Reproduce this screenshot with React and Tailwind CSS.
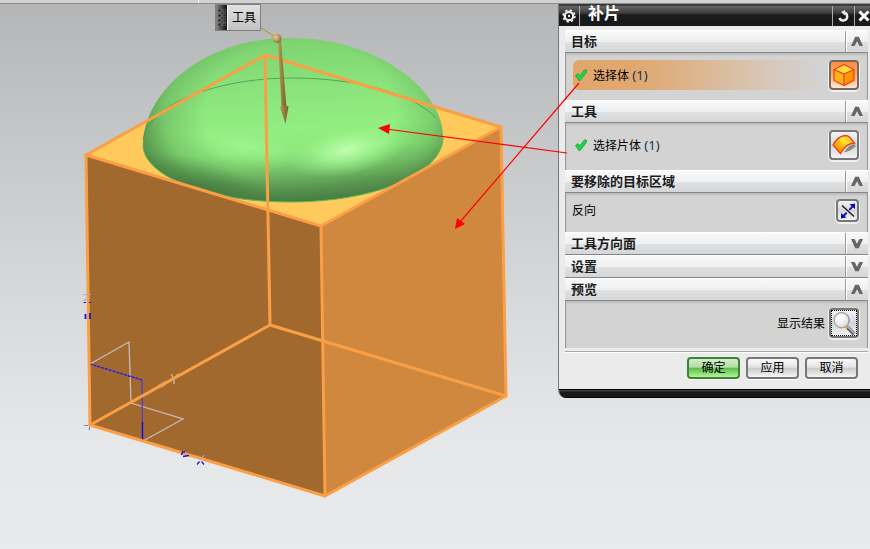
import React, { useState } from 'react';
import clsx from 'clsx';

const EDGE = '#fa9f45';

function CheckMark() {
  return (
    <svg width="12" height="12" viewBox="0 0 12 12" className="shrink-0" aria-hidden="true">
      <path d="M0.500 6.500 L3 4.500 L4.700 7 L9.500 0.800 L11.700 1.400 L11.200 3.800 L5.200 11.400 L3.800 11.400 Z" fill="#22d44a" stroke="#12a52f" strokeWidth="0.8" />
    </svg>
  );
}

function Chevron({ open }) {
  return (
    <svg width="14" height="12" viewBox="0 0 14 12" aria-hidden="true">
      <path d={open ? 'M1 10 L5.2 0.8 H8.8 L13 10 H9.4 L7 5.2 L4.6 10 Z' : 'M1 1 L5.2 10.2 H8.8 L13 1 H9.4 L7 5.8 L4.6 1 Z'} fill="#666" />
    </svg>
  );
}

function CubeIcon() {
  return (
    <svg width="24" height="24" viewBox="0 0 24 24" aria-hidden="true">
      <defs>
        <linearGradient id="cubeRight" x1="0" y1="0" x2="1" y2="1">
          <stop offset="0" stopColor="#ffb400" />
          <stop offset="1" stopColor="#ff7a00" />
        </linearGradient>
      </defs>
      <path d="M12 1.5 L22 6.5 L12 11 L2 6.5 Z" fill="#ffdc3c" />
      <path d="M2 6.5 L12 11 V22.5 L2 17.5 Z" fill="#ffb21c" />
      <path d="M22 6.5 L12 11 V22.5 L22 17.5 Z" fill="url(#cubeRight)" />
      <path d="M12 1.5 L22 6.5 V17.5 L12 22.5 L2 17.5 V6.5 Z M2 6.5 L12 11 L22 6.5 M12 11 V22.5" fill="none" stroke="#f03c14" strokeWidth="1.2" />
    </svg>
  );
}

function SheetIcon() {
  return (
    <svg width="24" height="24" viewBox="0 0 24 24" aria-hidden="true">
      <defs>
        <linearGradient id="sheetFill" x1="0" y1="1" x2="1" y2="0">
          <stop offset="0" stopColor="#ff8a00" />
          <stop offset="0.3" stopColor="#ff9c08" />
          <stop offset="0.6" stopColor="#ffe62e" />
          <stop offset="1" stopColor="#ffae10" />
        </linearGradient>
      </defs>
      <path d="M12 19.500 Q16 12 22 11 L24 13 Q19 18 12 19.500 Z" fill="#8a8a8a" />
      <path d="M1 12 C4 6.500 8 3 13 2.500 Q16 2.500 17.500 4 L22.5 10 C16 10 12 14 8.500 20.500 Z" fill="url(#sheetFill)" stroke="#e8401c" strokeWidth="1.3" />
    </svg>
  );
}

function ReverseIcon() {
  return (
    <svg width="16" height="16" viewBox="0 0 16 16" aria-hidden="true">
      <path d="M2 2.5 L14 13.5" stroke="#111" strokeWidth="1.3" />
      <path d="M3.5 13 L13 3" stroke="#1414b4" strokeWidth="2" strokeDasharray="4.500 4" />
      <path d="M15 0.500 V6 L9.500 1.500 Z M1 15.500 V10 L6.500 14.500 Z" fill="#0a0ab4" />
    </svg>
  );
}

function MagnifierIcon() {
  return (
    <svg width="26" height="26" viewBox="0 0 26 26" aria-hidden="true">
      <defs>
        <radialGradient id="lens" cx="0.35" cy="0.3" r="0.8">
          <stop offset="0" stopColor="#fff" />
          <stop offset="0.7" stopColor="#e8e8ea" />
          <stop offset="1" stopColor="#b8bcc8" />
        </radialGradient>
      </defs>
      <path d="M16.5 17.5 L24 25" stroke="#62666f" strokeWidth="4" />
      <path d="M17 17 L24.5 24.5" stroke="#b8c0d0" strokeWidth="1.4" />
      <path d="M15 18.5 L18 15.5" stroke="#e6a51e" strokeWidth="2.5" />
      <circle cx="10.5" cy="10" r="8.2" fill="url(#lens)" stroke="#a0a0a4" strokeWidth="1.3" />
      <path d="M16 4.2 A8.2 8.2 0 0 1 18 13" fill="none" stroke="#7fa4e6" strokeWidth="1.3" />
    </svg>
  );
}

function IconButton({ id, small, active, focused, children }) {
  return (
    <button
      id={id}
      type="button"
      className={clsx(
        'flex shrink-0 items-center justify-center rounded border-2 shadow-[0_1px_0_1px_#f0f0f0]',
        small ? 'size-[23px]' : 'size-[30px]',
        active
          ? 'border-[#76695f] bg-linear-to-b from-[#ff8a3c] via-[#ffac70] to-[#ffe6d0]'
          : 'border-[#777] bg-linear-to-b from-[#f4f4f4] via-[#d6d6d8] to-[#f2f2f2]'
      )}
    >
      {focused ? (
        <span className="flex size-[26px] items-center justify-center border border-dotted border-black">{children}</span>
      ) : (
        children
      )}
    </button>
  );
}

function Section({ title, defaultOpen = false, children }) {
  const [open, setOpen] = useState(defaultOpen);

  return (
    <section>
      <button
        type="button"
        aria-expanded={open}
        onClick={() => setOpen(!open)}
        className="flex h-[23px] w-full items-stretch border-t border-b border-t-white border-b-[#858585] bg-[linear-gradient(#f8f8f9_0%,#eff0f1_50%,#dfe0e2_55%,#d5d6d8_100%)] text-left"
      >
        <span className="flex flex-1 items-center pl-1.5 text-[13px] leading-5 font-bold text-[#1c1c1c]">{title}</span>
        <span className="flex w-[23px] items-center justify-center border-l border-[#999] shadow-[inset_1px_0_0_#fff]">
          <Chevron open={open} />
        </span>
      </button>
      {open && children && (
        <div className="border-x border-[#999] bg-[#d3d3d3] shadow-[inset_0_2px_2px_#bcbcbc]">{children}</div>
      )}
    </section>
  );
}

function SelectionRow({ id, name, count, active, children }) {
  return (
    <div className="flex h-[47px] items-start pt-[7px] pr-2 pl-[7px]">
      <div
        className={clsx(
          'flex h-[30px] flex-1 items-center gap-1.5 rounded-l-md pl-0.5',
          active && 'bg-[linear-gradient(90deg,#e2a66b_0%,#e0a870_25%,#d3d3d3_96%)]'
        )}
      >
        <CheckMark />
        <label htmlFor={id} className="text-[12px] leading-4 text-black">
          {name} <span className="font-['Noto_Sans'] text-[13px] text-[#16324f]">({count})</span>
        </label>
      </div>
      <IconButton id={id} active={active}>
        {children}
      </IconButton>
    </div>
  );
}

function FooterButton({ primary, children }) {
  return (
    <button
      type="button"
      className={clsx(
        'h-[22px] w-[53px] rounded border-2 text-[12px] leading-4 text-black shadow-[0_1px_0_#fff]',
        primary
          ? 'border-[#3d8238] bg-[linear-gradient(#d2edca_0%,#b2dfa5_45%,#62bd4d_52%,#b0f595_100%)]'
          : 'border-[#777] bg-[linear-gradient(#fafafa_0%,#e4e4e5_45%,#c9cacb_52%,#f5f5f5_100%)]'
      )}
    >
      {children}
    </button>
  );
}

function TitleBar() {
  return (
    <div className="flex h-[22px] items-stretch border-t-2 border-[#3a3a3a] bg-[linear-gradient(#666_0%,#3c3c3c_35%,#1b1b1b_45%,#181818_100%)] text-white">
      <button type="button" aria-label="选项" className="flex w-[21px] items-center justify-center border-r border-[#aaa]">
        <svg width="14" height="14" viewBox="0 0 14 14" aria-hidden="true">
          <circle cx="7" cy="7" r="4.2" fill="none" stroke="#eee" strokeWidth="2.2" />
          <circle cx="7" cy="7" r="5.9" fill="none" stroke="#eee" strokeWidth="1.6" strokeDasharray="2.3 2.33" />
          <circle cx="7" cy="7" r="1.2" fill="#eee" />
        </svg>
      </button>
      <h1 className="flex flex-1 items-center pb-1 pl-2 text-[16px] leading-4 font-bold">补片</h1>
      <button type="button" aria-label="重置" className="flex w-[22px] items-center justify-center border-l border-[#aaa]">
        <svg width="14" height="14" viewBox="0 0 14 14" aria-hidden="true">
          <path d="M6.500 3.500 A4 4 0 1 1 2.500 9" fill="none" stroke="#eee" strokeWidth="2.4" />
          <path d="M8 1 V6.500 L4 3 Z" fill="#eee" />
        </svg>
      </button>
      <button type="button" aria-label="关闭" className="flex w-4 items-center justify-end border-l border-[#aaa]">
        <svg width="12" height="12" viewBox="0 0 12 12" aria-hidden="true">
          <path d="M1.500 1.5 L10.5 10.5 M10.5 1.5 L1.500 10.5" stroke="#fff" strokeWidth="3" />
        </svg>
      </button>
    </div>
  );
}

function PatchDialog() {
  return (
    <form
      className="w-[312px] overflow-hidden rounded-bl-lg border-l border-[#777] bg-[#ebebeb]"
      onSubmit={(e) => e.preventDefault()}
    >
      <TitleBar />
      <div className="pt-1 pr-0.5 pl-1.5">
        <Section title="目标" defaultOpen>
          <SelectionRow id="target-body" name="选择体" count={1} active>
            <CubeIcon />
          </SelectionRow>
        </Section>
        <Section title="工具" defaultOpen>
          <SelectionRow id="tool-sheet" name="选择片体" count={1}>
            <SheetIcon />
          </SelectionRow>
        </Section>
        <Section title="要移除的目标区域" defaultOpen>
          <div className="flex h-[39px] items-start justify-between pt-1.5 pr-2 pl-1.5">
            <label htmlFor="reverse" className="text-[12px] leading-6">反向</label>
            <IconButton id="reverse" small>
              <ReverseIcon />
            </IconButton>
          </div>
        </Section>
        <Section title="工具方向面" />
        <Section title="设置" />
        <Section title="预览" defaultOpen>
          <div className="flex h-[47px] items-start justify-end gap-1 pt-[7px] pr-2">
            <label htmlFor="show-result" className="text-[12px] leading-8">显示结果</label>
            <IconButton id="show-result" focused>
              <MagnifierIcon />
            </IconButton>
          </div>
        </Section>
        <div className="mt-[3px] border-t border-b border-t-[#aaa] border-b-white" />
        <div className="flex justify-end gap-1.5 pt-1 pr-2.5 pb-2.5">
          <FooterButton primary>确定</FooterButton>
          <FooterButton>应用</FooterButton>
          <FooterButton>取消</FooterButton>
        </div>
      </div>
      <div className="h-[9px] border-t border-black bg-[linear-gradient(#555_0%,#1a1a1a_25%,#1a1a1a_80%,#000_100%)]" />
    </form>
  );
}

// Block, dome sheet and datum axes in the graphics window
function ModelView() {
  return (
    <svg width="870" height="549" viewBox="0 0 870 549" className="absolute top-0 left-0" aria-hidden="true">
      <defs>
        <linearGradient id="domeBase" gradientUnits="userSpaceOnUse" x1="285" y1="38" x2="295" y2="202">
          <stop offset="0" stopColor="#7dd270" />
          <stop offset="0.25" stopColor="#88e07a" />
          <stop offset="0.55" stopColor="#92ee80" />
          <stop offset="0.68" stopColor="#8de97c" />
          <stop offset="0.78" stopColor="#7acb6c" />
          <stop offset="0.88" stopColor="#62a358" />
          <stop offset="1" stopColor="#4a8043" />
        </linearGradient>
        <radialGradient id="domeRim" gradientUnits="userSpaceOnUse" cx="0" cy="0" r="1" gradientTransform="translate(300 112) scale(172 128)">
          <stop offset="0.55" stopColor="#3a6a35" stopOpacity="0" />
          <stop offset="0.78" stopColor="#3a6a35" stopOpacity="0.25" />
          <stop offset="1" stopColor="#3a6a35" stopOpacity="0.8" />
        </radialGradient>
        <radialGradient id="domeShade" gradientUnits="userSpaceOnUse" cx="0" cy="0" r="1" gradientTransform="translate(205 186) rotate(18) scale(85 24)">
          <stop offset="0" stopColor="#3a6a35" stopOpacity="0.5" />
          <stop offset="1" stopColor="#3a6a35" stopOpacity="0" />
        </radialGradient>
        <radialGradient id="glowMain" gradientUnits="userSpaceOnUse" cx="0" cy="0" r="1" gradientTransform="translate(347 150) rotate(-12) scale(62 25)">
          <stop offset="0" stopColor="#c0ffb0" />
          <stop offset="0.4" stopColor="#acfb9b" stopOpacity="0.7" />
          <stop offset="1" stopColor="#94ee84" stopOpacity="0" />
        </radialGradient>
        <radialGradient id="glowSide" gradientUnits="userSpaceOnUse" cx="0" cy="0" r="1" gradientTransform="translate(245 146) rotate(10) scale(62 20)">
          <stop offset="0" stopColor="#a0f490" />
          <stop offset="1" stopColor="#94ee84" stopOpacity="0" />
        </radialGradient>
        <linearGradient id="shaft" x1="0" y1="0" x2="1" y2="0">
          <stop offset="0" stopColor="#b59a55" />
          <stop offset="1" stopColor="#75602e" />
        </linearGradient>
        <radialGradient id="knob" cx="0.35" cy="0.35" r="0.7">
          <stop offset="0" stopColor="#e6cf8a" />
          <stop offset="1" stopColor="#86703a" />
        </radialGradient>
        <clipPath id="domeClip">
          <path d="M143 145 C143 95 200 38 290 38 C378 38 443 90 443 137 C443 174 374 202 290 202 C208 202 143 176 143 145 Z" />
        </clipPath>
      </defs>

      <path d="M265 55 L501 127 L321 226 L86 155 Z" fill="#ffc95c" />
      <path d="M86 155 L321 226 L325 496 L90 425 Z" fill="#a2692e" />
      <path d="M321 226 L501 127 L506 396 L325 496 Z" fill="#cf883d" />

      <g clipPath="url(#domeClip)">
        <rect x="140" y="35" width="306" height="170" fill="url(#domeBase)" />
        <rect x="140" y="35" width="306" height="170" fill="url(#domeRim)" />
        <rect x="140" y="35" width="306" height="170" fill="url(#domeShade)" />
        <rect x="140" y="35" width="306" height="170" fill="url(#glowSide)" />
        <rect x="140" y="35" width="306" height="170" fill="url(#glowMain)" />
      </g>
      <path d="M143 140 C148 105 215 78 292 78 C360 78 415 95 436 118" fill="none" stroke="#4f9148" strokeWidth="0.8" />
      <path d="M143 145 C143 176 208 202 290 202 C374 202 443 174 443 137" fill="none" stroke="#5ebb5a" strokeWidth="1" />

      <g fill="none" stroke="#c4bcbc" strokeWidth="1.3">
        <path d="M90 364 L129 342 L131 403 L183 419 L143 441" />
        <path d="M171 374 L174 379 L178 374 M174 379 V384" />
      </g>
      <path d="M90 364 L142 380 L142.500 440" fill="none" stroke="#5a3cc8" strokeWidth="1.3" />
      <path d="M90 364 L142 380" stroke="#1e14e6" strokeWidth="1.3" strokeDasharray="2 2" />
      <path d="M142.500 422 V440" stroke="#0a0ae6" strokeWidth="1.3" />
      <path d="M158 385 L162 388 L166 384 L165 381 Z" fill="#a8a29a" />

      <g fill="none" stroke={EDGE} strokeWidth="3" strokeLinejoin="round" strokeLinecap="round">
        <path d="M265 55 L501 127 L321 226 L86 155 Z" />
        <path d="M86 155 L90 425 L325 496 L506 396 L501 127" />
        <path d="M321 226 L325 496" />
        <path d="M265 55 L270 325 L90 425 M270 325 L506 396" />
      </g>

      {/* axis letters and cones */}
      <g fill="none" stroke="#1414dc" strokeWidth="1.2">
        <path d="M83.500 302.500 H86 M89 302.500 H91" />
        <path d="M85.500 319 V314 M90 319 V313" strokeWidth="1.8" />
        <path d="M181.500 455 L182.500 452 H185 M183 456.500 L189 455.500" strokeWidth="1.5" />
        <path d="M197 464.500 L199.500 461.500 M201.500 461.500 L204 464.500" />
        <path d="M84 425.500 H88 M89.500 427 V430" stroke="#8a70e0" />
      </g>
      <g fill="none" stroke="#a9a4dc" strokeWidth="1.2">
        <path d="M83.500 294.500 H91 M84 301 L86 299" />
        <path d="M197.500 455.500 L199 457.500 M204 455 L202 458" />
      </g>

      <path d="M261 28 L274 36" stroke="#b39a52" strokeWidth="1.3" />
      <path d="M278 40 L281 40 L286.500 108 L281.500 108 Z" fill="url(#shaft)" />
      <path d="M280 107 Q284 105 288.500 106.500 L285.500 124 Z" fill="url(#shaft)" />
      <circle cx="277" cy="38.500" r="4.500" fill="url(#knob)" />
    </svg>
  );
}

// Leader arrows from the dialog rows to the geometry they select
function LeaderArrows() {
  return (
    <svg width="870" height="549" viewBox="0 0 870 549" className="pointer-events-none absolute top-0 left-0" aria-hidden="true">
      <g stroke="#f00" strokeWidth="1.2">
        <path d="M579 83 L460 222" />
        <path d="M567 153 L386 129" />
      </g>
      <path d="M455 229 L457 218 L465 224 Z M378 128 L390 124 L389 134 Z" fill="#f00" />
    </svg>
  );
}

function ToolTag() {
  return (
    <div className="absolute top-1 left-[215px] flex h-[27px] items-stretch border border-[#808080] bg-linear-to-b from-[#e2e2e2] to-[#c2c2c2]">
      <div className="flex w-3 items-center justify-center border-r border-white bg-linear-to-r from-[#888] to-[#111]">
        <svg width="8" height="17" viewBox="0 0 8 17" aria-hidden="true">
          {[0, 5, 10, 14].map((y) => (
            <path key={y} d={`M0 ${y} h3 v3 h-3 Z M5 ${y} h3 v3 h-3 Z`} fill="#222" stroke="#999" strokeWidth="0.5" />
          ))}
        </svg>
      </div>
      <span className="flex items-center px-1 text-[12px] leading-4">工具</span>
    </div>
  );
}

export default function App() {
  return (
    <div className="relative min-h-screen overflow-hidden bg-[linear-gradient(#b4b5b7_0%,#c2c3c5_20%,#d5d6d8_50%,#e6e7e9_80%,#e9eaeb_100%)] font-['Liberation_Sans','Noto_Sans_CJK_SC',sans-serif] text-black">
      <ModelView />
      <header className="relative flex h-1 border-b border-[#8c8c8c] bg-[#d2d2d2]">
        <div className="w-[199px] border-r border-white" />
      </header>
      <ToolTag />
      <main className="relative flex justify-end">
        <PatchDialog />
      </main>
      <LeaderArrows />
    </div>
  );
}
